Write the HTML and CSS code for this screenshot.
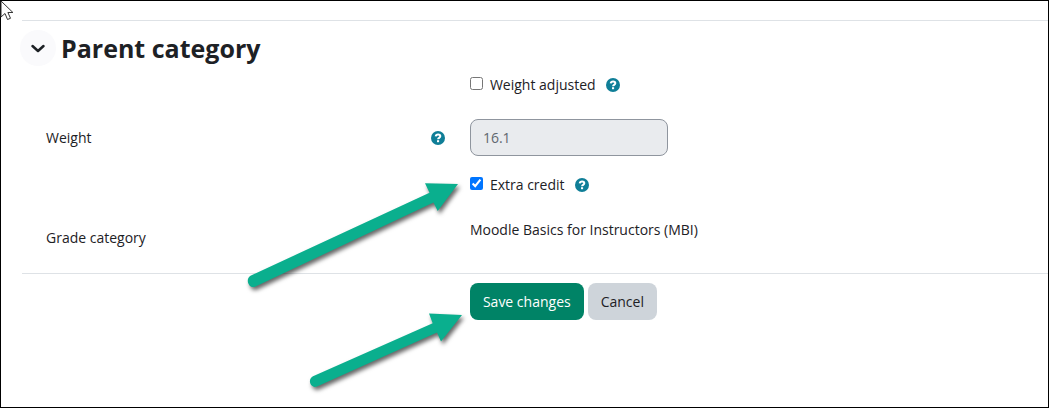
FILE: index.html
```html
<!DOCTYPE html>
<html lang="en">
<head>
    <meta charset="UTF-8">
    <meta name="viewport" content="width=device-width, initial-scale=1.0">
    <title>Edit grade item</title>
    <link rel="stylesheet" href="styles.css">
</head>
<body>
    <!-- Shared question mark icon for the help buttons -->
    <svg class="defs" aria-hidden="true">
        <symbol id="icon-help" viewBox="0 0 14 14">
            <circle cx="7" cy="7" r="7" fill="#0f7e97"/>
            <path d="M4.700 5.400C4.900 4 5.900 3.400 7.100 3.400c1.300 0 2.200.7 2.200 1.800 0 1.600-2.200 1.600-2.200 3" fill="none" stroke="#fff" stroke-width="2"/>
            <rect x="6" y="9.200" width="2.100" height="2" fill="#fff"/>
        </symbol>
    </svg>

    <form class="grade-form">
        <div class="section-header">
            <button type="button" class="toggle" aria-label="Collapse Parent category" aria-expanded="true">
                <svg width="16" height="16" viewBox="0 0 16 16"><path d="M2.500 6L8 11l5.500-5" fill="none" stroke="#1d2125" stroke-width="2.500" stroke-linecap="round" stroke-linejoin="round"/></svg>
            </button>
            <h3>Parent category</h3>
        </div>

        <div class="rows">
            <div class="row">
                <div class="field check">
                    <input type="checkbox" id="weightoverride">
                    <label for="weightoverride">Weight adjusted</label>
                    <button type="button" class="help" aria-label="Help with Weight adjusted"><svg width="14" height="14"><use href="#icon-help"/></svg></button>
                </div>
            </div>
            <div class="row">
                <div class="name">
                    <label for="weight">Weight</label>
                    <button type="button" class="help" aria-label="Help with Weight"><svg width="14" height="14"><use href="#icon-help"/></svg></button>
                </div>
                <div class="field">
                    <input type="text" class="text-input" id="weight" value="16.1" disabled>
                </div>
            </div>
            <div class="row">
                <div class="field check">
                    <input type="checkbox" id="extracredit" checked>
                    <label for="extracredit">Extra credit</label>
                    <button type="button" class="help" aria-label="Help with Extra credit"><svg width="14" height="14"><use href="#icon-help"/></svg></button>
                </div>
            </div>
            <div class="row">
                <div class="name">Grade category</div>
                <div class="field">Moodle Basics for Instructors (MBI)</div>
            </div>
        </div>

        <div class="row actions">
            <div class="field">
                <button type="submit" class="btn btn-primary">Save changes</button>
                <button type="button" class="btn btn-secondary">Cancel</button>
            </div>
        </div>
    </form>

    <!-- Arrows pointing at the checkbox and the save button -->
    <svg class="annotations" width="480" height="400" viewBox="0 0 480 400" aria-hidden="true">
        <g class="arrow">
            <path d="M250.500 275.700L429.500 192.800L425 183.200L458 184L437.700 211L433.500 202.500L255 286.700C248.500 289 245 279 250.500 275.700Z"/>
            <path d="M313 376.300L432.700 323.300L429 313.500L462 315L441 341.500L437 332.500L317 386.500C310.500 389 307 379.500 313 376.300Z"/>
        </g>
    </svg>
    <svg class="cursor" width="14" height="21" viewBox="0 0 14 21" aria-hidden="true">
        <path d="M1 1v16l4-3.500 2.500 6 3-1.200-2.600-5.800h5z" fill="#fff" stroke="#333" stroke-width="1"/>
    </svg>
</body>
</html>
```

FILE: styles.css
```css
* {
    box-sizing: border-box;
}
body {
    margin: 0;
    min-height: 100vh;
    padding: 19px 0 0 21px;
    border: 1px solid #000;
    background-color: #fff;
    color: #1d2125;
    font-family: "Segoe UI", "Open Sans", "Noto Sans", sans-serif;
    font-size: 14px;
    line-height: 22px;
}
button,
input {
    font: inherit;
}
.defs {
    display: none;
}
.grade-form {
    border-top: 1px solid #dee2e6;
}

/* Section title with its collapse button */
.section-header {
    display: flex;
    align-items: center;
    gap: 5px;
    margin: 9px 0 6px -2px;
}
.toggle {
    display: flex;
    align-items: center;
    justify-content: center;
    width: 36px;
    height: 36px;
    padding: 0;
    border: 0;
    border-radius: 50%;
    background-color: #fafafc;
}
h3 {
    margin: 0;
    font-size: 25px;
    line-height: 34px;
    font-weight: 700;
}

/* Form rows: name on the left, field on the right */
.rows {
    display: grid;
    gap: 16px;
    padding-bottom: 24px;
    border-bottom: 1px solid #dee2e6;
}
.row {
    display: grid;
    grid-template-columns: 11fr 15fr;
    padding-left: 24px;
}
.name {
    display: flex;
    align-items: flex-start;
    justify-content: space-between;
    padding: 8px 25px 0 0;
}
.field {
    grid-column: 2;
}
.check {
    display: flex;
    align-items: center;
    padding: 2px 0 7px;
}
.check input {
    width: 13px;
    height: 13px;
    margin: 0 7px 3px 0;
}
.check .help {
    margin-left: 10px;
}
.help {
    display: flex;
    align-items: center;
    height: 22px;
    padding: 0;
    border: 0;
    background: none;
}
.text-input {
    display: block;
    width: 198px;
    height: 37px;
    padding: 0 12px;
    border: 1px solid #8f959e;
    border-radius: 8px;
    background-color: #e9ebee;
    color: #5f676f;
}

/* Buttons */
.actions {
    padding-top: 9px;
}
.actions .field {
    display: flex;
    gap: 4px;
}
.btn {
    height: 37px;
    padding: 0 13px;
    border: 0;
    border-radius: 8px;
}
.btn-primary {
    background-color: #008366;
    color: #fff;
}
.btn-secondary {
    background-color: #ced4da;
    color: #1d2125;
}

/* Drawn over the form */
.annotations,
.cursor {
    position: absolute;
    top: 0;
    left: 0;
    pointer-events: none;
}
.arrow {
    fill: #0aaf8e;
    filter: drop-shadow(2px 3px 2px rgba(0, 0, 0, 0.6));
}
```
